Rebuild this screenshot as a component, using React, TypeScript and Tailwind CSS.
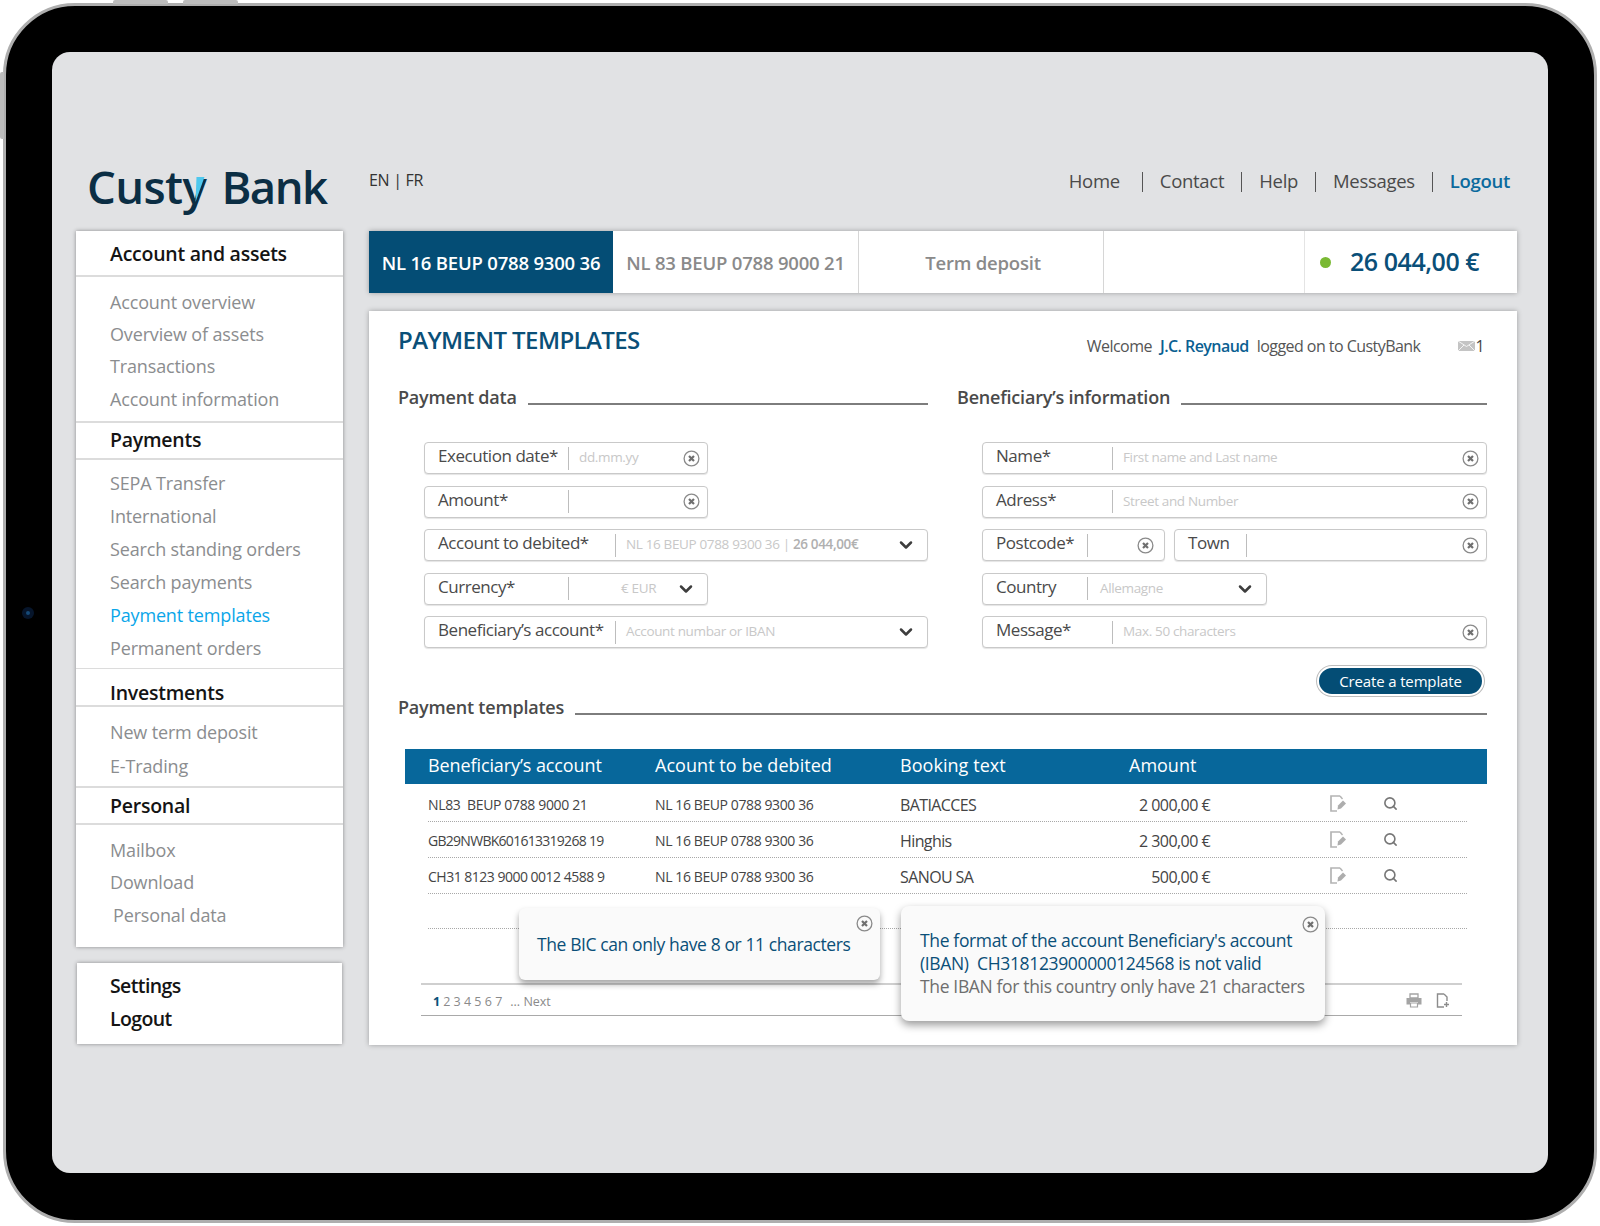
import React from "react";
import { ChevronDown, Search } from "lucide-react";

const navSections = [
  {
    title: "Account and assets",
    head: "h-[46px] pt-[1px]",
    list: "pt-[9px] pb-[6px]",
    row: "h-[32.3px]",
    items: ["Account overview", "Overview of assets", "Transactions", "Account information"],
  },
  {
    title: "Payments",
    head: "h-[39px] border-t-2 pb-[3px]",
    list: "pt-[7px] pb-[3px]",
    row: "h-[33px]",
    items: ["SEPA Transfer", "International", "Search standing orders", "Search payments", "Payment templates", "Permanent orders"],
  },
  {
    title: "Investments",
    head: "h-[39px] border-t pt-[10px]",
    list: "pt-[9px] pb-[3px]",
    row: "h-[33.3px]",
    items: ["New term deposit", "E-Trading"],
  },
  {
    title: "Personal",
    head: "h-[39px] border-t-2 pt-[1px]",
    list: "pt-[9px] pb-[14px]",
    row: "h-[32.5px]",
    items: ["Mailbox", "Download", "Personal data"],
  },
];

const rows = [
  ["NL83\u00a0\u00a0BEUP 0788 9000 21", "BATIACCES", "2 000,00 €", "h-[38px]", "tracking-[-0.35px]"],
  ["GB29NWBK601613319268 19", "Hinghis", "2 300,00 €", "h-[36px]", "tracking-[-0.72px]"],
  ["CH31 8123 9000 0012 4588 9", "SANOU SA", "500,00 €", "h-[36px]", "tracking-[-0.5px]"],
];

const ClearIcon = () => (
  <svg width="17" height="17" viewBox="0 0 17 17" className="shrink-0">
    <circle cx="8.5" cy="8.5" r="7.4" fill="none" stroke="#8a8a8a" strokeWidth="1.3" />
    <path d="M6 6l5 5M11 6l-5 5" stroke="#6f6f6f" strokeWidth="2.2" />
  </svg>
);

const EditIcon = () => (
  <svg width="17" height="17" viewBox="0 0 17 17" className="shrink-0">
    <path d="M10 1H1v15h6" fill="none" stroke="#b4b4b4" strokeWidth="1.7" />
    <path d="M10 1l2.5 3" fill="none" stroke="#b4b4b4" strokeWidth="1.4" />
    <path d="M8 10.5l5-5 3 3-5 5-3.5 1z" fill="#adadad" />
  </svg>
);

const PrintIcon = () => (
  <svg width="16" height="15" viewBox="0 0 16 15" className="shrink-0">
    <path d="M4 1h8v4H4z" fill="none" stroke="#a4a4a4" strokeWidth="1.3" />
    <path d="M0.5 5h15v6.5H12V9H4v2.5H0.5z" fill="#a4a4a4" />
    <path d="M4.5 10h7v4h-7z" fill="none" stroke="#a4a4a4" strokeWidth="1.2" />
  </svg>
);

const NewDocIcon = () => (
  <svg width="14" height="15" viewBox="0 0 14 15" className="shrink-0">
    <path d="M8 1H1.5v13H8M8 1l3 3v4" fill="none" stroke="#8c8c8c" strokeWidth="1.4" />
    <path d="M10.5 9v5M8 11.5h5" stroke="#8c8c8c" strokeWidth="1.4" />
  </svg>
);

const MailIcon = () => (
  <svg width="17" height="10" viewBox="0 0 17 10" className="shrink-0">
    <rect width="17" height="10" fill="#c4c4c4" />
    <path d="M0 0l8.5 5.5L17 0M0 10l6-6M17 10l-6-6" fill="none" stroke="#f4f4f4" strokeWidth="1" />
  </svg>
);

type FieldProps = {
  label: string;
  box: string;
  labelBox: string;
  select?: boolean;
  valueClass?: string;
  clearClass?: string;
  children?: React.ReactNode;
};

const Field = ({ label, box, labelBox, select, valueClass, clearClass, children }: FieldProps) => (
  <div className={`flex h-[32px] items-center rounded-[4px] border border-[#c9c9c9] bg-white shadow-[0_1px_1px_#e4e4e4] ${box}`}>
    <div className={`-mt-[4px] shrink-0 whitespace-nowrap pl-[13px] text-[17px] tracking-[-0.45px] text-[#4a4a4a] ${labelBox}`}>{label}</div>
    <div className="h-[23px] w-px shrink-0 bg-[#bdbdbd]" />
    <div className={`-mt-[1px] min-w-0 flex-1 whitespace-nowrap text-[13.5px] tracking-[-0.35px] text-[#c8c8c8] ${valueClass ?? "pl-[10px]"}`}>{children}</div>
    {select ? (
      <ChevronDown className="mr-[11px] size-[20px] shrink-0 text-[#3d3d3d]" strokeWidth={3} />
    ) : (
      <div className={clearClass ?? "mr-[7px]"}><ClearIcon /></div>
    )}
  </div>
);

const SectionHeading = ({ title, mb }: { title: string; mb: string }) => (
  <div className="flex h-[24px] items-end gap-[11px]">
    <div className="self-center whitespace-nowrap text-[18px] font-semibold leading-[24px] tracking-[-0.2px] text-[#4a4a4a]">{title}</div>
    <div className={`h-[2px] flex-1 bg-[#7d7d7d] ${mb}`} />
  </div>
);

const Sidebar = () => (
  <div className="flex w-[267px] flex-col gap-[16px]">
    <div className="h-[716px] bg-white shadow-[0_0_4px_rgba(0,0,0,0.4)]">
      {navSections.map(section => (
        <div key={section.title}>
          <div className={`flex items-center border-b-2 border-[#dcdcdc] pl-[34px] text-[19.5px] font-semibold tracking-[-0.25px] text-[#141414] ${section.head}`}>
            {section.title}
          </div>
          <div className={section.list}>
            {section.items.map(item => (
              <div
                key={item}
                className={`flex items-center pl-[34px] text-[18px] tracking-[-0.15px] ${section.row} ${item === "Payment templates" ? "text-[#0aa6e9]" : "text-[#8b8d8f]"} ${item === "Personal data" ? "ml-[3px]" : ""}`}
              >
                {item}
              </div>
            ))}
          </div>
        </div>
      ))}
    </div>
    <div className="mx-[1px] flex h-[81px] flex-col justify-center bg-white pb-[4px] pl-[33px] text-[19.5px] font-semibold leading-[33px] tracking-[-0.6px] text-[#141414] shadow-[0_0_4px_rgba(0,0,0,0.4)]">
      <div>Settings</div>
      <div>Logout</div>
    </div>
  </div>
);

const TemplatesTable = () => (
  <div className="ml-[7px] mt-[30px]">
    <div className="grid h-[35px] grid-cols-[227px_245px_228px_1fr] items-center bg-[#07679b] pb-[2px] pl-[23px] text-[18px] text-white">
      <div className="tracking-[-0.1px]">Beneficiary’s account</div>
      <div className="tracking-[0.05px]">Acount to be debited</div>
      <div className="tracking-[0.05px]">Booking text</div>
      <div className="pl-[1px]">Amount</div>
    </div>
    <div className="ml-[23px] mr-[20px]">
      {rows.map(([account, text, amount, height, spacing]) => (
        <div key={account} className={`grid grid-cols-[227px_245px_228px_82px_1fr] items-end border-b border-dotted border-[#a8a8a8] pb-[5px] leading-[22px] text-[#444] ${height}`}>
          <div className={`whitespace-nowrap text-[14px] ${spacing}`}>{account}</div>
          <div className="whitespace-nowrap text-[14px] tracking-[-0.4px]">NL 16 BEUP 0788 9300 36</div>
          <div className="text-[16px] tracking-[-0.6px]">{text}</div>
          <div className="whitespace-nowrap text-right text-[16px] tracking-[-0.55px]">{amount}</div>
          <div className="flex h-[22px] -translate-y-[2px] items-center gap-[36px] pl-[120px]">
            <EditIcon />
            <Search className="size-[15px] text-[#777]" strokeWidth={2.6} />
          </div>
        </div>
      ))}
      <div className="h-[35px] border-b border-dotted border-[#a8a8a8]" />
    </div>
  </div>
);

const Popups = () => (
  <>
    <div className="absolute left-[150px] top-[597px] h-[72px] w-[361px] rounded-[6px] bg-[#fafafa] pl-[18px] pt-[23px] text-[17.5px] leading-[26px] tracking-[-0.4px] text-[#0a4f78] shadow-[0_4px_6px_rgba(0,0,0,0.35)]">
      The BIC can only have 8 or 11 characters
      <div className="absolute right-[7px] top-[7px]"><ClearIcon /></div>
    </div>
    <div className="absolute left-[532px] top-[595px] h-[115px] w-[424px] rounded-[8px] bg-[#fafafa] pl-[19px] pt-[23px] text-[17.5px] leading-[23px] tracking-[-0.35px] text-[#0a4f78] shadow-[0_4px_8px_rgba(0,0,0,0.4)]">
      <div>The format of the account Beneficiary's account</div>
      <div>(IBAN)&nbsp; CH318123900000124568 is not valid</div>
      <div className="text-[#6e6e6e]">The IBAN for this country only have 21 characters</div>
      <div className="absolute right-[6px] top-[10px]"><ClearIcon /></div>
    </div>
  </>
);

const MainCard = () => (
  <div className="relative h-[734px] bg-white pl-[29px] pr-[30px] pt-[15px] shadow-[0_0_5px_rgba(0,0,0,0.3)]">
    <div className="flex h-[30px] items-center justify-between">
      <div className="-mt-[2px] text-[24px] font-semibold tracking-[-0.6px] text-[#0a4f78]">PAYMENT TEMPLATES</div>
      <div className="mt-[10px] flex items-center text-[16px] tracking-[-0.55px] text-[#555]">
        <span>Welcome</span>
        <span className="ml-[8px] font-semibold text-[#0b5f92]">J.C. Reynaud</span>
        <span className="ml-[8px]">logged on to CustyBank</span>
        <span className="ml-[38px]"><MailIcon /></span>
        <span className="mr-[3px] text-[#444]">1</span>
      </div>
    </div>

    <div className="mt-[29px] grid grid-cols-[530px_530px] gap-x-[29px]">
      <div>
        <SectionHeading title="Payment data" mb="mb-[4px]" />
        <div className="mt-[33px] flex flex-col gap-[11.5px] pl-[26px]">
          <Field label="Execution date*" box="w-[284px]" labelBox="w-[143px]">dd.mm.yy</Field>
          <Field label="Amount*" box="w-[284px]" labelBox="w-[143px]" />
          <Field label="Account to debited*" box="w-[504px]" labelBox="w-[190px]" select>
            NL 16 BEUP 0788 9300 36 | <b className="font-semibold text-[#b0b0b0]">26 044,00€</b>
          </Field>
          <Field label="Currency*" box="w-[284px]" labelBox="w-[143px]" select valueClass="pl-[52px]">€ EUR</Field>
          <Field label="Beneficiary’s account*" box="w-[504px]" labelBox="w-[190px]" select>Account numbar or IBAN</Field>
        </div>
      </div>
      <div>
        <SectionHeading title="Beneficiary’s information" mb="mb-[4px]" />
        <div className="mt-[33px] flex flex-col gap-[11.5px] pl-[25px]">
          <Field label="Name*" box="w-[505px]" labelBox="w-[129px]">First name and Last name</Field>
          <Field label="Adress*" box="w-[505px]" labelBox="w-[129px]">Street and Number</Field>
          <div className="flex gap-[9px]">
            <Field label="Postcode*" box="w-[183px]" labelBox="w-[104px]" clearClass="mr-[10px]" />
            <Field label="Town" box="w-[313px]" labelBox="w-[71px]" />
          </div>
          <Field label="Country" box="w-[285px]" labelBox="w-[104px]" select valueClass="pl-[12px]">Allemagne</Field>
          <Field label="Message*" box="w-[505px]" labelBox="w-[129px]">Max. 50 characters</Field>
        </div>
      </div>
    </div>

    <div className="mr-[3px] mt-[18px] flex justify-end">
      <div className="flex h-[30px] w-[167px] items-center justify-center rounded-full border-2 border-white bg-[#044d75] text-[15px] tracking-[-0.15px] text-white shadow-[0_0_0_1px_#bdbdbd]">
        Create a template
      </div>
    </div>

    <div className="-mt-[1px]">
      <SectionHeading title="Payment templates" mb="mb-[4px]" />
    </div>

    <TemplatesTable />

    <div className="ml-[23px] mr-[25px] mt-[54px] flex h-[33px] items-center justify-between border-b border-t-2 border-b-[#a9a9a9] border-t-[#cfcfcf] pl-[12px] pr-[12px]">
      <div className="mt-[4px] flex items-center gap-[3px] text-[12.5px] font-medium text-[#8a8a8a]">
        <b className="font-bold text-[#0a4f78]">1</b>
        <span>2 3 4 5 6 7</span>
        <span className="ml-[5px]">... Next</span>
      </div>
      <div className="flex items-center gap-[14px]">
        <PrintIcon />
        <NewDocIcon />
      </div>
    </div>

    <Popups />
  </div>
);

const Header = () => (
  <div className="flex h-[179px]">
    <div className="relative w-[293px] pl-[11px] pt-[102px]">
      <div className="whitespace-nowrap text-[45.5px] font-semibold leading-[64px] tracking-[-0.6px] text-[#0b2e44]">
        Custy <span className="ml-[4px] tracking-[-1.6px]">Bank</span>
      </div>
      <svg width="10" height="26" viewBox="0 0 10 26" className="absolute left-[119px] top-[125px]">
        <path d="M1.5 0H9.5L0.5 25z" fill="#4fc8ee" />
      </svg>
    </div>
    <div className="pt-[116px] text-[16px] tracking-[-0.3px] text-[#333]">EN | FR</div>
    <div className="flex flex-1 items-start justify-end gap-[17px] pr-[38px] pt-[115px] text-[18.5px] tracking-[-0.3px] text-[#4a4a4a]">
      <span className="mr-[5px]">Home</span>
      <span className="mt-[5px] h-[20px] w-px bg-[#555]" />
      <span>Contact</span>
      <span className="mt-[5px] h-[20px] w-px bg-[#555]" />
      <span>Help</span>
      <span className="mt-[5px] h-[20px] w-px bg-[#555]" />
      <span>Messages</span>
      <span className="mt-[5px] h-[20px] w-px bg-[#555]" />
      <span className="font-semibold text-[#0b6a9d]">Logout</span>
    </div>
  </div>
);

const AccountTabs = () => (
  <div className="flex h-[62px] items-stretch bg-white shadow-[0_0_5px_rgba(0,0,0,0.3)]">
    <div className="flex w-[244px] items-center justify-center bg-[#044d75] pt-[2px] text-[18.5px] font-semibold tracking-[-0.2px] text-white">NL 16 BEUP 0788 9300 36</div>
    <div className="flex w-[246px] items-center justify-center border-r border-[#d6d6d6] pt-[2px] text-[18.5px] font-semibold tracking-[-0.2px] text-[#8a8a8a]">NL 83 BEUP 0788 9000 21</div>
    <div className="flex w-[245px] items-center justify-center border-r border-[#d6d6d6] pl-[4px] pt-[2px] text-[18.5px] font-semibold tracking-[-0.2px] text-[#8a8a8a]">Term deposit</div>
    <div className="w-[201px] border-r border-[#e4e4e4]" />
    <div className="flex flex-1 items-center pl-[15px]">
      <div className="size-[11px] rounded-full bg-[#7ab933]" />
      <div className="ml-[19px] text-[25px] font-semibold tracking-[-0.45px] text-[#0a4f78]">26 044,00 €</div>
    </div>
  </div>
);

export default function App() {
  return (
    <div className="relative h-[1226px] w-[1600px] overflow-hidden bg-white px-[3px] pt-[3px] font-['Open_Sans',sans-serif]">
      <div className="absolute left-[113px] top-0 h-[4px] w-[55px] rounded-t-[2px] bg-[#bdbdbd]" />
      <div className="absolute left-[183px] top-0 h-[4px] w-[55px] rounded-t-[2px] bg-[#bdbdbd]" />
      <div className="absolute left-0 top-[72px] h-[67px] w-[4px] rounded-l-[2px] bg-[#bdbdbd]" />
      <div className="h-[1220px] rounded-[72px] border-[3px] border-[#aeaeae] bg-black p-[46px]">
        <div className="relative h-[1121px] w-[1496px] rounded-[18px] bg-[#e1e2e4] pl-[24px]">
          <div className="absolute -left-[30px] top-[555px] size-[12px] rounded-full bg-[#06152b]">
            <div className="m-[4px] size-[4px] rounded-full bg-[#164a78]" />
          </div>
          <Header />
          <div className="flex items-start gap-[26px]">
            <Sidebar />
            <div className="flex w-[1148px] flex-col gap-[18px]">
              <AccountTabs />
              <MainCard />
            </div>
          </div>
        </div>
      </div>
    </div>
  );
}
